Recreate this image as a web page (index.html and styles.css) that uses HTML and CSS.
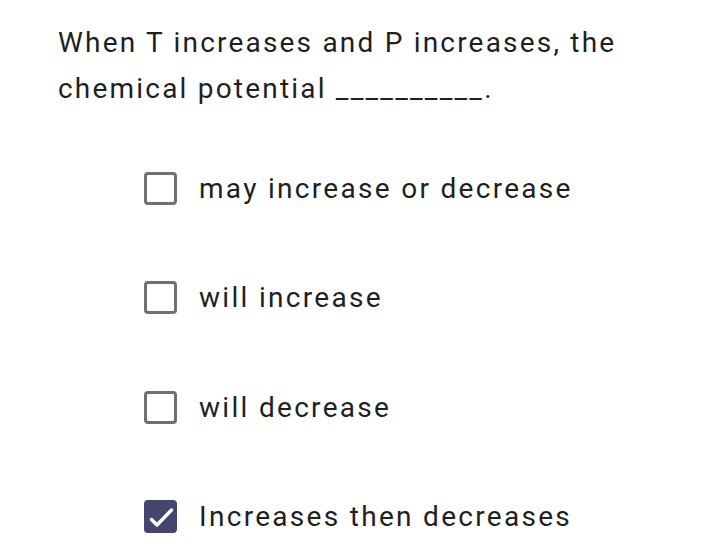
FILE: index.html
```html
<!DOCTYPE html>
<html>
<head>
<meta charset="utf-8">
<link rel="stylesheet" href="styles.css">
</head>
<body>
<div class="question">
  <p class="prompt">When T increases and P increases, the chemical potential __________.</p>
  <ul class="options">
    <li class="option"><span class="box"></span><span class="label">may increase or decrease</span></li>
    <li class="option"><span class="box"></span><span class="label">will increase</span></li>
    <li class="option"><span class="box"></span><span class="label">will decrease</span></li>
    <li class="option"><span class="box checked"><svg viewBox="0 0 33 33" width="33" height="33"><path d="M7.5 19.5 L13 25 L27.5 10" fill="none" stroke="#fff" stroke-width="3.4" stroke-linecap="round" stroke-linejoin="round"/></svg></span><span class="label">Increases then decreases</span></li>
  </ul>
</div>
</body>
</html>
```
FILE: styles.css
```css
html, body {
  margin: 0;
  padding: 0;
  background: #ffffff;
}
body {
  font-family: Roboto, "Noto Sans", sans-serif;
  color: #1f1f1f;
}
.question {
  padding: 20px 20px 0 58px;
}
.prompt {
  margin: 0;
  font-size: 28px;
  line-height: 46px;
  letter-spacing: 2.2px;
  width: 620px;
}
.options {
  list-style: none;
  margin: 0;
  padding: 60px 0 0 86px;
  display: flex;
  flex-direction: column;
  gap: 76.3px;
}
.option {
  display: flex;
  align-items: center;
  gap: 22px;
  height: 33px;
}
.box {
  width: 33px;
  height: 33px;
  box-sizing: border-box;
  border: 3px solid #707070;
  border-radius: 4px;
  flex: none;
  display: flex;
  align-items: center;
  justify-content: center;
}
.box.checked {
  background: #45456f;
  border: 0;
}
.label {
  font-size: 28px;
  letter-spacing: 2.3px;
}
```
